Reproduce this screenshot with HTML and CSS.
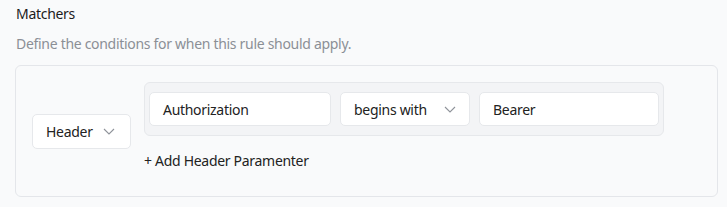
FILE: index.html
```html
<!DOCTYPE html>
<html>
	<head>
		<meta charset="UTF-8">
		<title>Matchers</title>
		<link rel="stylesheet" href="styles.css">
	</head>
	<body>
		<div class="section">
			<div class="title">Matchers</div>
			<div class="desc">Define the conditions for when this rule should apply.</div>
			<div class="card">
				<div class="select type">
					<span>Header</span>
					<svg class="chev" width="12" height="7" viewBox="0 0 12 7"><path d="M1 1l5 5 5-5" fill="none" stroke="#8f939a" stroke-width="1.1"/></svg>
				</div>
				<div class="params">
					<div class="group">
						<div class="field key">Authorization</div>
						<div class="select op">
							<span>begins with</span>
							<svg class="chev" width="12" height="7" viewBox="0 0 12 7"><path d="M1 1l5 5 5-5" fill="none" stroke="#8f939a" stroke-width="1.1"/></svg>
						</div>
						<div class="field value">Bearer</div>
					</div>
					<a class="add" href="###">+ Add Header Paramenter</a>
				</div>
			</div>
		</div>
	</body>
</html>
```

FILE: styles.css
```css
*{
	padding: 0;
	margin: 0;
	box-sizing: border-box;
}
body{
	background-color: #f9fafb;
	font-family: "Noto Sans", "Open Sans", sans-serif;
	font-size: 14px;
	letter-spacing: -0.3px;
	color: #222;
}
.section{
	padding: 3px 9px 0 15px;
}
.title{
	height: 22px;
	line-height: 22px;
	color: #1c1c1c;
	padding-left: 1px;
}
.desc{
	margin-top: 8px;
	height: 22px;
	line-height: 22px;
	color: #8b8f96;
	padding-left: 1px;
}
.card{
	margin-top: 10px;
	height: 132px;
	border: 1px solid #e4e6ea;
	border-radius: 6px;
	padding: 16px;
	display: flex;
	align-items: center;
	gap: 13px;
}
.select, .field{
	height: 35px;
	background: #fff;
	border: 1px solid #e6e8eb;
	border-radius: 5px;
	display: flex;
	align-items: center;
	padding: 0 13px;
}
.select{
	justify-content: space-between;
}
.type{
	width: 99px;
	padding-right: 15px;
}
.params{
	display: flex;
	flex-direction: column;
	align-self: flex-start;
}
.group{
	display: flex;
	gap: 9px;
	background: #f3f4f6;
	border: 1px solid #e6e8eb;
	border-radius: 6px;
	padding: 9px 4px;
	width: 520px;
}
.group .select, .group .field{
	height: 34px;
}
.key{
	width: 182px;
}
.op{
	width: 130px;
}
.value{
	width: 180px;
}
.add{
	display: block;
	margin-top: 15px;
	line-height: 20px;
	color: #222;
	text-decoration: none;
}
```
